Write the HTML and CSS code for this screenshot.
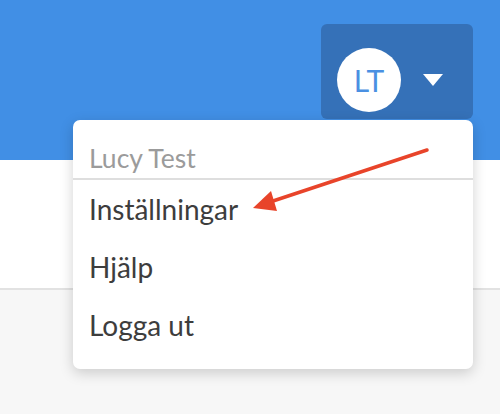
FILE: index.html
```html
<!DOCTYPE html>
<html>
<head>
    <title>Inställningar</title>
    <meta name="viewport" content="width=device-width, initial-scale=1.0">
    <link rel="stylesheet" href="styles.css">
</head>
<body>
    <div class="topbar">
        <div class="user-btn">
            <div class="avatar">LT</div>
            <span class="caret"></span>
        </div>
    </div>
    <div class="content"></div>
    <div class="footer"></div>

    <div class="dropdown">
        <div class="dropdown-name">Lucy Test</div>
        <a class="dropdown-item" href="#">Inställningar</a>
        <a class="dropdown-item" href="#">Hjälp</a>
        <a class="dropdown-item" href="#">Logga ut</a>
    </div>

    <!-- annotation arrow -->
    <svg class="pointer" width="500" height="414" viewBox="0 0 500 414">
        <line x1="427" y1="150" x2="270" y2="202" stroke="#e8442a" stroke-width="3.5" stroke-linecap="round"/>
        <polygon points="253,208 277,211 271,191" fill="#e8442a"/>
    </svg>
</body>
</html>
```

FILE: styles.css
```css
body {
    margin: 0;
    height: 414px;
    overflow: hidden;
    font-family: Lato, "Open Sans", sans-serif;
    background-color: #f7f7f7;
    position: relative;
}

.topbar {
    height: 160px;
    background-color: #418fe5;
    display: flex;
    justify-content: flex-end;
    align-items: flex-start;
    padding: 24px 27px 0 0;
    box-sizing: border-box;
}

.user-btn {
    width: 152px;
    height: 95px;
    box-sizing: border-box;
    padding: 24px 0 7px 16px;
    background-color: #3571b8;
    border-radius: 6px;
    display: flex;
    align-items: center;
    gap: 22px;
}

.avatar {
    width: 64px;
    height: 64px;
    border-radius: 50%;
    background-color: white;
    color: #4a90e2;
    font-size: 30px;
    display: flex;
    justify-content: center;
    align-items: center;
}

.caret {
    width: 0;
    height: 0;
    border-left: 10px solid transparent;
    border-right: 10px solid transparent;
    border-top: 12px solid white;
}

.content {
    height: 128px;
    background-color: white;
    border-bottom: 2px solid #e2e2e2;
}

.dropdown {
    position: absolute;
    left: 73px;
    top: 120px;
    width: 400px;
    padding-bottom: 15px;
    background-color: white;
    border-radius: 7px;
    box-shadow: 0 4px 14px rgba(0, 0, 0, 0.18);
}

.dropdown-name {
    padding: 23px 16px 5px;
    font-size: 26.5px;
    line-height: 30px;
    color: #9b9b9b;
    border-bottom: 2px solid #dedede;
}

.dropdown-item {
    display: block;
    padding: 0 16px;
    font-size: 28px;
    line-height: 58px;
    color: #3d3d3d;
    text-decoration: none;
}

.pointer {
    position: absolute;
    left: 0;
    top: 0;
}
```
